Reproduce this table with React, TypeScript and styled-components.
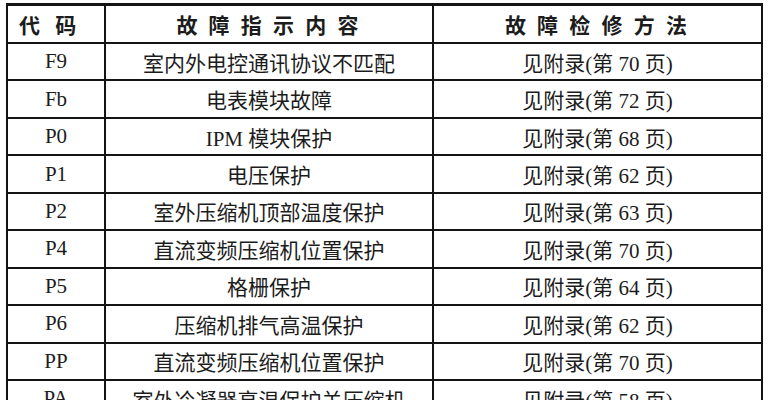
import styled, { createGlobalStyle } from "styled-components";

const GlobalStyle = createGlobalStyle`
  html, body {
    margin: 0;
    padding: 0;
    background: #ffffff;
  }
`;

const Page = styled.div`
  width: 771px;
  height: 400px;
  overflow: hidden;
  background: #ffffff;
  padding: 3px 0 0 6px;
  box-sizing: border-box;
`;

const Table = styled.div`
  width: 757px;
  display: grid;
  grid-template-columns: 96px 326px 327px;
  grid-template-rows: 36px;
  grid-auto-rows: 35.45px;
  gap: 2px;
  padding: 3px 2px 2px 2px;
  background: #141414;
  box-sizing: border-box;
`;

const Cell = styled.div<{ $head?: boolean; $left?: boolean }>`
  background: #ffffff;
  display: flex;
  align-items: center;
  justify-content: ${(p) => (p.$left ? "flex-start" : "center")};
  padding-left: ${(p) => (p.$left ? "11px" : "0")};
  font-family: "Liberation Serif", "Noto Sans CJK SC", serif;
  font-size: 21px;
  font-weight: ${(p) => (p.$head ? 700 : 400)};
  letter-spacing: ${(p) => (p.$head ? "3px" : "0")};
  word-spacing: ${(p) => (p.$left ? "4px" : "0")};
  color: #1c1c1c;
  white-space: nowrap;
  overflow: hidden;
`;

const rows: [string, string, number][] = [
  ["F9", "室内外电控通讯协议不匹配", 70],
  ["Fb", "电表模块故障", 72],
  ["P0", "IPM 模块保护", 68],
  ["P1", "电压保护", 62],
  ["P2", "室外压缩机顶部温度保护", 63],
  ["P4", "直流变频压缩机位置保护", 70],
  ["P5", "格栅保护", 64],
  ["P6", "压缩机排气高温保护", 62],
  ["PP", "直流变频压缩机位置保护", 70],
  ["PA", "室外冷凝器高温保护关压缩机", 58],
];

export default function App() {
  return (
    <>
      <GlobalStyle />
      <Page>
        <Table>
          <Cell $head $left>
            代 码
          </Cell>
          <Cell $head>故 障 指 示 内 容</Cell>
          <Cell $head>故 障 检 修 方 法</Cell>
          {rows.map(([code, desc, page]) => (
            <>
              <Cell key={code + "c"}>{code}</Cell>
              <Cell key={code + "d"}>{desc}</Cell>
              <Cell key={code + "p"}>见附录(第 {page} 页)</Cell>
            </>
          ))}
        </Table>
      </Page>
    </>
  );
}
